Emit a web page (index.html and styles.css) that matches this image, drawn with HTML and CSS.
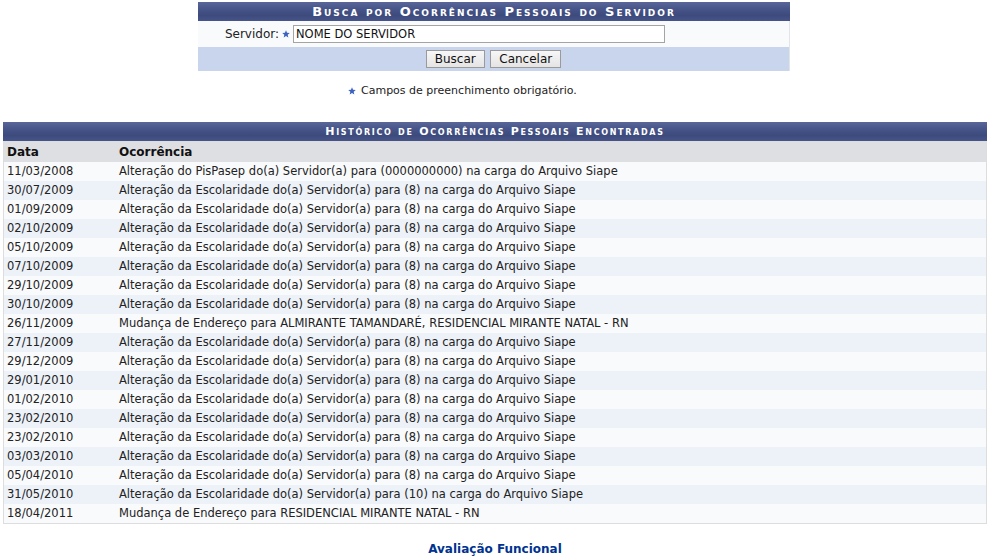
FILE: index.html
```html
<!DOCTYPE html>
<html lang="pt-BR">
<head>
<meta charset="utf-8">
<title>Busca por Ocorrências Pessoais do Servidor</title>
<link rel="stylesheet" href="styles.css">
</head>
<body>
<div class="page">
  <table class="formulario">
    <caption class="cap cap-form">Busca por Ocorrências Pessoais do Servidor</caption>
    <tbody>
      <tr class="campo">
        <th class="label">Servidor:</th>
        <td class="valor">
          <span class="req"><svg viewBox="0 0 10 10" width="8" height="8"><polygon points="5,0.3 6.3,3.4 9.7,3.6 7.1,5.8 7.9,9.3 5,7.4 2.1,9.3 2.9,5.8 0.3,3.6 3.7,3.4" fill="#3d63c0"/></svg></span>
          <input class="entrada" type="text" value="NOME DO SERVIDOR">
        </td>
      </tr>
    </tbody>
    <tfoot>
      <tr>
        <td colspan="2" class="acoes">
          <button class="btn" type="button">Buscar</button>
          <button class="btn" type="button">Cancelar</button>
        </td>
      </tr>
    </tfoot>
  </table>

  <p class="obrig"><span class="req"><svg viewBox="0 0 10 10" width="8" height="8"><polygon points="5,0.3 6.3,3.4 9.7,3.6 7.1,5.8 7.9,9.3 5,7.4 2.1,9.3 2.9,5.8 0.3,3.6 3.7,3.4" fill="#3d63c0"/></svg></span> Campos de preenchimento obrigatório.</p>

  <table class="listagem">
    <caption class="cap cap-list">Histórico de Ocorrências Pessoais Encontradas</caption>
    <thead>
      <tr><th class="c-data">Data</th><th>Ocorrência</th></tr>
    </thead>
    <tbody>
      <tr><td>11/03/2008</td><td>Alteração do PisPasep do(a) Servidor(a) para (0000000000) na carga do Arquivo Siape</td></tr>
      <tr><td>30/07/2009</td><td>Alteração da Escolaridade do(a) Servidor(a) para (8) na carga do Arquivo Siape</td></tr>
      <tr><td>01/09/2009</td><td>Alteração da Escolaridade do(a) Servidor(a) para (8) na carga do Arquivo Siape</td></tr>
      <tr><td>02/10/2009</td><td>Alteração da Escolaridade do(a) Servidor(a) para (8) na carga do Arquivo Siape</td></tr>
      <tr><td>05/10/2009</td><td>Alteração da Escolaridade do(a) Servidor(a) para (8) na carga do Arquivo Siape</td></tr>
      <tr><td>07/10/2009</td><td>Alteração da Escolaridade do(a) Servidor(a) para (8) na carga do Arquivo Siape</td></tr>
      <tr><td>29/10/2009</td><td>Alteração da Escolaridade do(a) Servidor(a) para (8) na carga do Arquivo Siape</td></tr>
      <tr><td>30/10/2009</td><td>Alteração da Escolaridade do(a) Servidor(a) para (8) na carga do Arquivo Siape</td></tr>
      <tr><td>26/11/2009</td><td>Mudança de Endereço para ALMIRANTE TAMANDARÉ, RESIDENCIAL MIRANTE NATAL - RN</td></tr>
      <tr><td>27/11/2009</td><td>Alteração da Escolaridade do(a) Servidor(a) para (8) na carga do Arquivo Siape</td></tr>
      <tr><td>29/12/2009</td><td>Alteração da Escolaridade do(a) Servidor(a) para (8) na carga do Arquivo Siape</td></tr>
      <tr><td>29/01/2010</td><td>Alteração da Escolaridade do(a) Servidor(a) para (8) na carga do Arquivo Siape</td></tr>
      <tr><td>01/02/2010</td><td>Alteração da Escolaridade do(a) Servidor(a) para (8) na carga do Arquivo Siape</td></tr>
      <tr><td>23/02/2010</td><td>Alteração da Escolaridade do(a) Servidor(a) para (8) na carga do Arquivo Siape</td></tr>
      <tr><td>23/02/2010</td><td>Alteração da Escolaridade do(a) Servidor(a) para (8) na carga do Arquivo Siape</td></tr>
      <tr><td>03/03/2010</td><td>Alteração da Escolaridade do(a) Servidor(a) para (8) na carga do Arquivo Siape</td></tr>
      <tr><td>05/04/2010</td><td>Alteração da Escolaridade do(a) Servidor(a) para (8) na carga do Arquivo Siape</td></tr>
      <tr><td>31/05/2010</td><td>Alteração da Escolaridade do(a) Servidor(a) para (10) na carga do Arquivo Siape</td></tr>
      <tr><td>18/04/2011</td><td>Mudança de Endereço para RESIDENCIAL MIRANTE NATAL - RN</td></tr>
    </tbody>
  </table>

  <div class="rodape"><a class="voltar" href="#">Avaliação Funcional</a></div>
</div>
</body>
</html>
```

FILE: styles.css
```css
html, body {
  margin: 0;
  padding: 0;
  background: #ffffff;
}

body {
  font-family: Verdana, "DejaVu Sans", sans-serif;
  font-size: 11px;
  color: #222222;
}

.page {
  padding: 2px 2px 0 3px;
}

table {
  border-collapse: collapse;
  border-spacing: 0;
}

.cap {
  background: linear-gradient(#5a6699 0%, #47558a 35%, #3d4a7c 70%, #46548a 100%);
  color: #ffffff;
  font-weight: bold;
  font-variant: small-caps;
  text-align: center;
  height: 19px;
  line-height: 19px;
  padding: 0;
  white-space: nowrap;
}

.cap-form {
  font-size: 13px;
  letter-spacing: 2px;
}

.cap-list {
  font-size: 11px;
  letter-spacing: 1.7px;
}

/* Formulário */
.formulario {
  width: 592px;
  margin: 0 auto 0 195px;
  border-right: 1px solid #e2e4ea;
}

.campo {
  background: #f9fafc;
}

.campo .label {
  width: 81px;
  text-align: right;
  font-weight: normal;
  font-size: 12px;
  padding: 4px 3px 4px 0;
  color: #222;
}

.campo .valor {
  padding: 4px 0;
  display: flex;
  align-items: center;
}

.req {
  display: inline-flex;
  align-items: center;
  width: 10px;
  margin-right: 1px;
}

.entrada {
  width: 366px;
  height: 14px;
  margin: 0;
  padding: 1px 2px;
  border: 1px solid #a4a4a4;
  font-family: Verdana, "DejaVu Sans", sans-serif;
  font-size: 11.5px;
  color: #111;
  background: #ffffff;
}

.acoes {
  background: #c8d5ec;
  text-align: center;
  padding: 3px 0 3px;
  height: 17px;
}

.btn {
  font-family: Verdana, "DejaVu Sans", sans-serif;
  font-size: 12px;
  color: #111;
  height: 18px;
  padding: 0 8px;
  margin: 0 1px;
  border: 1px solid #9a9a9a;
  background: linear-gradient(#f7f7f7, #e4e4e4);
  line-height: 16px;
}

.obrig {
  margin: 13px 0 0 345px;
  font-size: 11px;
  display: flex;
  align-items: center;
  gap: 3px;
}

.obrig .req {
  width: 9px;
}

/* Listagem */
.listagem {
  width: 984px;
  margin-top: 25px;
  border: 1px solid #dddddd;
}

.listagem thead tr {
  background: #dedfe3;
}

.listagem th {
  text-align: left;
  font-weight: bold;
  font-size: 12px;
  padding: 3px 3px;
  height: 14px;
  color: #111;
}

.listagem .c-data {
  width: 106px;
}

.listagem td {
  padding: 3px 3px;
  height: 13px;
  line-height: 13px;
  font-size: 11.5px;
  color: #222;
  white-space: nowrap;
}

.listagem tbody tr:nth-child(odd) {
  background: #f9fafc;
}

.listagem tbody tr:nth-child(even) {
  background: #edf1f8;
}

.rodape {
  text-align: center;
  margin-top: 18px;
}

.voltar {
  color: #003390;
  font-weight: bold;
  font-size: 12px;
  text-decoration: none;
}
```
